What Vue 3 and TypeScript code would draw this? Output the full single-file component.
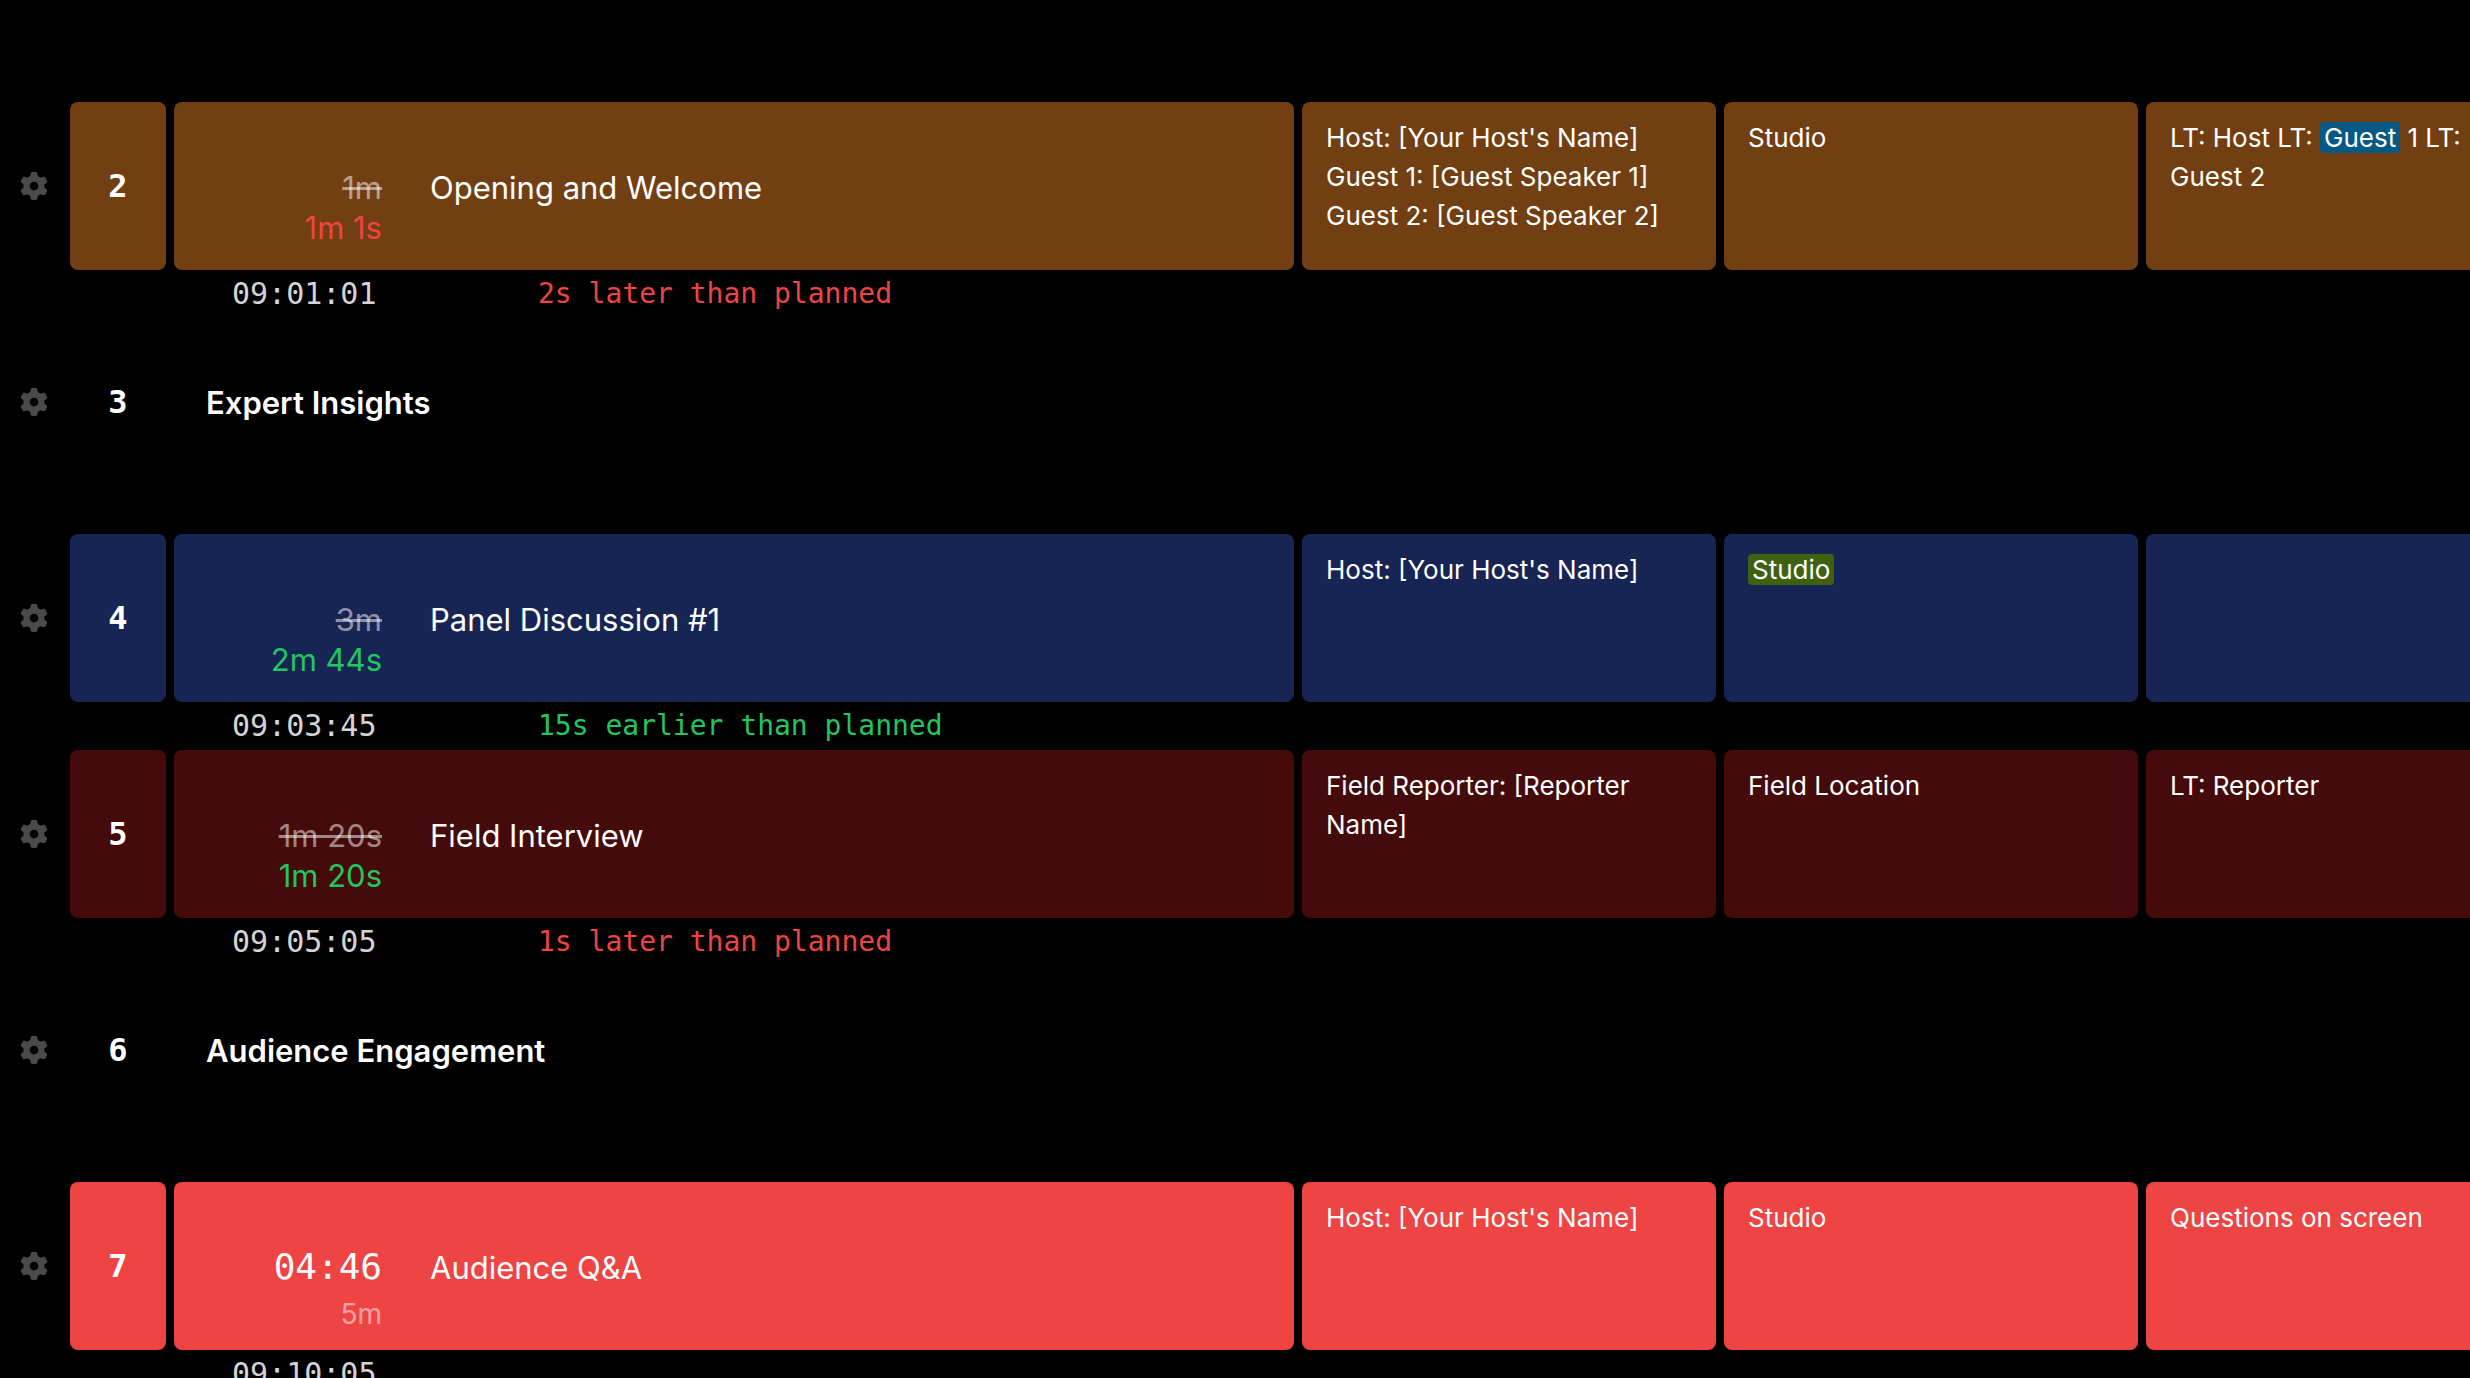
<script setup lang="ts">
type Tone = 'brown' | 'navy' | 'maroon' | 'red'

interface Segment {
  text: string
  mark?: 'sky' | 'lime'
}

interface Cue {
  kind: 'cue'
  no: number
  title: string
  tone: Tone
  planned: string
  actual?: string
  timer?: string
  late?: boolean
  notes: Segment[][][]
  clock: string
  offset?: string
}

interface Heading {
  kind: 'heading'
  no: number
  title: string
}

const rows: (Cue | Heading)[] = [
  {
    kind: 'cue',
    no: 2,
    title: 'Opening and Welcome',
    tone: 'brown',
    planned: '1m',
    actual: '1m 1s',
    late: true,
    notes: [
      [
        [{ text: "Host: [Your Host's Name]" }],
        [{ text: 'Guest 1: [Guest Speaker 1]' }],
        [{ text: 'Guest 2: [Guest Speaker 2]' }],
      ],
      [[{ text: 'Studio' }]],
      [[{ text: 'LT: Host LT: ' }, { text: 'Guest', mark: 'sky' }, { text: ' 1 LT: Guest 2' }]],
    ],
    clock: '09:01:01',
    offset: '2s later than planned',
  },
  { kind: 'heading', no: 3, title: 'Expert Insights' },
  {
    kind: 'cue',
    no: 4,
    title: 'Panel Discussion #1',
    tone: 'navy',
    planned: '3m',
    actual: '2m 44s',
    notes: [[[{ text: "Host: [Your Host's Name]" }]], [[{ text: 'Studio', mark: 'lime' }]], []],
    clock: '09:03:45',
    offset: '15s earlier than planned',
  },
  {
    kind: 'cue',
    no: 5,
    title: 'Field Interview',
    tone: 'maroon',
    planned: '1m 20s',
    actual: '1m 20s',
    notes: [
      [[{ text: 'Field Reporter: [Reporter Name]' }]],
      [[{ text: 'Field Location' }]],
      [[{ text: 'LT: Reporter' }]],
    ],
    clock: '09:05:05',
    offset: '1s later than planned',
  },
  { kind: 'heading', no: 6, title: 'Audience Engagement' },
  {
    kind: 'cue',
    no: 7,
    title: 'Audience Q&A',
    tone: 'red',
    planned: '5m',
    timer: '04:46',
    notes: [
      [[{ text: "Host: [Your Host's Name]" }]],
      [[{ text: 'Studio' }]],
      [[{ text: 'Questions on screen' }]],
    ],
    clock: '09:10:05',
  },
]

const gearPath =
  'M495.9 166.6c3.2 8.7 .5 18.4-6.4 24.6l-43.3 39.4c1.1 8.3 1.7 16.8 1.7 25.4s-.6 17.1-1.7 25.4l43.3 39.4c6.9 6.2 9.6 15.9 6.4 24.6c-4.4 11.9-9.7 23.3-15.8 34.3l-4.7 8.1c-6.6 11-14 21.4-22.1 31.2c-5.9 7.2-15.7 9.6-24.5 6.8l-55.7-17.7c-13.4 10.3-28.2 18.9-44 25.4l-12.5 57.1c-2 9.1-9 16.3-18.2 17.8c-13.8 2.3-28 3.5-42.5 3.5s-28.7-1.2-42.5-3.5c-9.2-1.5-16.2-8.7-18.2-17.8l-12.5-57.1c-15.8-6.5-30.6-15.1-44-25.4L83.1 425.9c-8.8 2.8-18.6 .3-24.5-6.8c-8.1-9.8-15.5-20.2-22.1-31.2l-4.7-8.1c-6.1-11-11.4-22.4-15.8-34.3c-3.2-8.7-.5-18.4 6.4-24.6l43.3-39.4C64.6 273.1 64 264.6 64 256s.6-17.1 1.7-25.4L22.4 191.2c-6.9-6.2-9.6-15.9-6.4-24.6c4.4-11.9 9.7-23.3 15.8-34.3l4.7-8.1c6.6-11 14-21.4 22.1-31.2c5.9-7.2 15.7-9.6 24.5-6.8l55.7 17.7c13.4-10.3 28.2-18.9 44-25.4l12.5-57.1c2-9.1 9-16.3 18.2-17.8C227.3 1.2 241.5 0 256 0s28.7 1.2 42.5 3.5c9.2 1.5 16.2 8.7 18.2 17.8l12.5 57.1c15.8 6.5 30.6 15.1 44 25.4l55.7-17.7c8.8-2.8 18.6-.3 24.5 6.8c8.1 9.8 15.5 20.2 22.1 31.2l4.7 8.1c6.1 11 11.4 22.4 15.8 34.3zM256 336a80 80 0 1 0 0-160 80 80 0 1 0 0 160z'

const isLater = (offset: string): boolean => offset.includes('later')
</script>

<template>
  <main class="rundown">
    <table class="cues">
      <colgroup>
        <col class="col-menu" />
        <col class="col-no" />
        <col class="col-main" />
        <col class="col-note" />
        <col class="col-note" />
        <col class="col-note" />
      </colgroup>
      <tbody v-for="row in rows" :key="row.no">
        <tr class="row">
          <td class="menu">
            <button type="button" class="gear" :aria-label="`Settings for ${row.title}`">
              <svg viewBox="0 0 512 512" aria-hidden="true"><path :d="gearPath" /></svg>
            </button>
          </td>
          <template v-if="row.kind === 'cue'">
            <td class="card no" :class="row.tone">{{ row.no }}</td>
            <td class="card" :class="row.tone">
              <div class="main">
                <div class="times">
                  <template v-if="row.timer">
                    <span class="timer">{{ row.timer }}</span>
                    <span class="budget">{{ row.planned }}</span>
                  </template>
                  <template v-else>
                    <s class="planned">{{ row.planned }}</s>
                    <span :class="row.late ? 'over' : 'under'">{{ row.actual }}</span>
                  </template>
                </div>
                <div class="title">{{ row.title }}</div>
              </div>
            </td>
            <td v-for="(note, n) in row.notes" :key="n" class="card note" :class="row.tone">
              <p v-for="(line, l) in note" :key="l">
                <template v-for="(part, p) in line" :key="p"
                  ><mark v-if="part.mark" :class="part.mark">{{ part.text }}</mark
                  ><template v-else>{{ part.text }}</template></template
                >
              </p>
            </td>
          </template>
          <template v-else>
            <td class="no">{{ row.no }}</td>
            <th class="heading" scope="rowgroup" colspan="4">{{ row.title }}</th>
          </template>
        </tr>
        <tr class="status">
          <td colspan="2"></td>
          <td colspan="4">
            <div v-if="row.kind === 'cue'" class="status-line">
              <time class="clock">{{ row.clock }}</time>
              <span v-if="row.offset" :class="isLater(row.offset) ? 'over' : 'under'">{{
                row.offset
              }}</span>
            </div>
          </td>
        </tr>
      </tbody>
    </table>
  </main>
</template>

<style>
body {
  margin: 0;
  background: #000;
}
</style>

<style scoped>
.rundown {
  box-sizing: border-box;
  height: 100vh;
  padding-top: 102px;
  overflow: auto;
  scrollbar-width: none;
  color: #fff;
  background: #000;
  font-family: Inter, sans-serif;
}

.cues {
  width: max-content;
  table-layout: fixed;
  border-collapse: separate;
  border-spacing: 8px 0;
}

.col-menu {
  width: 54px;
}

.col-no {
  width: 96px;
}

.col-main {
  width: 1120px;
}

.col-note {
  width: 414px;
}

td,
th {
  box-sizing: border-box;
  padding: 0;
}

.row {
  height: 168px;
}

.card {
  border-radius: 8px;
}

.brown {
  background: #713f12;
}

.navy {
  background: #172554;
}

.maroon {
  background: #450a0a;
}

.red {
  background: #ef4444;
}

.menu {
  padding-right: 2px;
  text-align: center;
}

.gear {
  display: inline-flex;
  padding: 0;
  border: 0;
  background: none;
  color: #4a4a4a;
  vertical-align: middle;
  cursor: pointer;
}

.gear svg {
  width: 28px;
  height: 28px;
  fill: currentColor;
}

.no {
  font: 700 32px/40px "DejaVu Sans Mono", monospace;
  text-align: center;
}

.main {
  display: flex;
  gap: 48px;
  height: 102px;
  padding-top: 66px;
  font-size: 31px;
  line-height: 40px;
}

.times {
  display: flex;
  flex-direction: column;
  width: 208px;
  text-align: right;
}

.timer {
  font-family: "DejaVu Sans Mono", monospace;
  font-size: 36px;
  line-height: 38px;
}

.budget {
  margin-top: 8px;
  font-size: 28px;
  opacity: 0.5;
}

.planned {
  color: rgb(255 255 255 / 50%);
}

.over {
  color: #ef4444;
}

.under {
  color: #22c55e;
}

.heading {
  padding-top: 2px;
  padding-left: 32px;
  font-size: 31px;
  font-weight: 600;
  line-height: 40px;
  text-align: left;
}

.note {
  padding: 16px 24px;
  font-size: 26px;
  line-height: 39px;
  vertical-align: top;
}

.note p {
  margin: 0;
}

mark {
  padding: 0 4px;
  border-radius: 4px;
  color: inherit;
}

.sky {
  background: #075985;
}

.lime {
  background: #3f6212;
}

.status {
  height: 48px;
}

.status-line {
  display: flex;
  padding-left: 58px;
  font: 28px/48px "DejaVu Sans Mono", monospace;
}

.clock {
  width: 306px;
  color: #d4d4d4;
  font-size: 30px;
}
</style>
